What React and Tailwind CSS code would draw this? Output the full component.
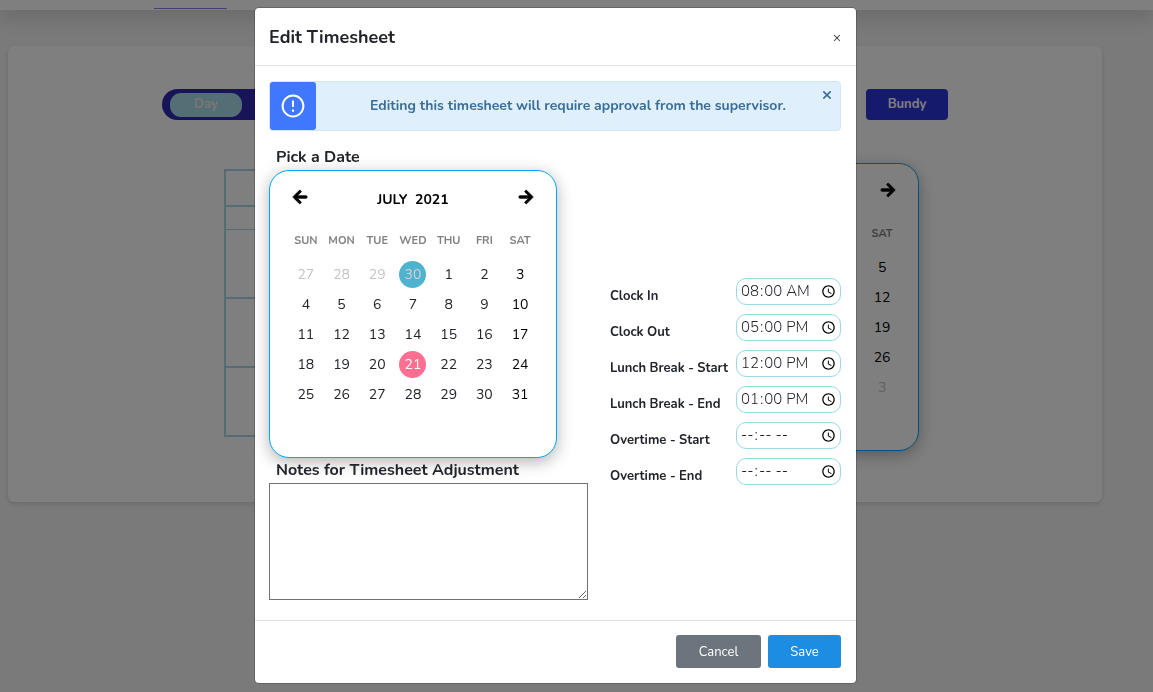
import { FaArrowLeft, FaArrowRight } from "react-icons/fa";

const DAYS = ["SUN", "MON", "TUE", "WED", "THU", "FRI", "SAT"];

function buildWeeks(leading, total, trailing) {
  const cells = [
    ...leading.map((n) => ({ n, muted: true })),
    ...Array.from({ length: total }, (_, i) => ({ n: i + 1, muted: false })),
    ...trailing.map((n) => ({ n, muted: true })),
  ];
  const weeks = [];
  for (let i = 0; i < cells.length; i += 7) weeks.push(cells.slice(i, i + 7));
  return weeks;
}

const JULY = buildWeeks([27, 28, 29, 30], 31, []);
const JUNE = buildWeeks([30, 31], 30, [1, 2, 3]);

function dayClass(cell, column, today, selected) {
  if (cell.muted && cell.n === today) return "bg-[#4fb3d0] text-[#d3d3d3]";
  if (!cell.muted && cell.n === selected) return "bg-[#ff6f91] text-white";
  if (cell.muted) return "text-[#c4c4c4]";
  return column === 6 ? "text-black" : "text-[#212529]";
}

function Calendar({ month, weeks, today, selected }) {
  return (
    <section
      aria-label={month}
      className="h-72 w-72 shrink-0 rounded-[20px] border border-[#00a8f3] bg-white px-[18px] pt-[13px] shadow-[0_4px_16px_rgba(0,0,0,0.3)]"
    >
      <div className="flex h-[30px] items-center justify-between px-1">
        <button type="button" aria-label="Previous month" className="-mt-1 flex text-black">
          <FaArrowLeft size={16} strokeWidth={26} stroke="currentColor" />
        </button>
        <h3 className="text-[14px] font-bold whitespace-pre text-black">{month}</h3>
        <button type="button" aria-label="Next month" className="-mt-1 flex text-black">
          <FaArrowRight size={16} strokeWidth={26} stroke="currentColor" />
        </button>
      </div>
      <table className="mt-3 w-full table-fixed text-center">
        <thead>
          <tr className="h-[30px]">
            {DAYS.map((d) => (
              <th key={d} scope="col" className="p-0 text-[11px] font-bold text-[#808080]">
                {d}
              </th>
            ))}
          </tr>
        </thead>
        <tbody>
          <tr className="h-[3px]" aria-hidden="true" />
          {weeks.map((week, w) => (
            <tr key={w} className="h-[30px]">
              {week.map((cell, i) => (
                <td key={i} className="p-0">
                  <button
                    type="button"
                    className={`mx-auto flex h-[27px] w-[27px] items-center justify-center rounded-full pt-px text-[14px] ${dayClass(cell, i, today, selected)}`}
                  >
                    {cell.n}
                  </button>
                </td>
              ))}
            </tr>
          ))}
        </tbody>
      </table>
    </section>
  );
}

const TIMES = [
  { id: "clock-in", label: "Clock In", value: "08:00" },
  { id: "clock-out", label: "Clock Out", value: "17:00" },
  { id: "lunch-start", label: "Lunch Break - Start", value: "12:00" },
  { id: "lunch-end", label: "Lunch Break - End", value: "13:00" },
  { id: "ot-start", label: "Overtime - Start", value: "" },
  { id: "ot-end", label: "Overtime - End", value: "" },
];

function Page() {
  return (
    <div className="min-h-screen bg-[#f4f4f4]">
      <nav className="flex h-[10px] items-end bg-white pl-[154px] shadow-[0_4px_20px_rgba(0,0,0,0.25)]">
        <span className="mb-px h-px w-[73px] bg-[#8a78f0]" />
      </nav>
      <main className="mt-9 mr-[51px] ml-2 h-[456px] rounded-md bg-white pt-[43px] shadow-[0_2px_4px_rgba(80,100,120,0.2)]">
        <div className="mr-[154px] ml-[154px] flex h-[31px] justify-between">
          <div className="flex w-[240px] items-center rounded-full bg-[#2e2aae] px-2">
            <button type="button" className="h-6 w-[72px] rounded-[11px] bg-[#a6dde9] text-[13px] font-bold text-[#f4eaea]">
              Day
            </button>
          </div>
          <button type="button" className="w-[82px] rounded-[4px] bg-[#2c34da] text-[13px] font-bold text-white">
            Bundy
          </button>
        </div>
        <div className="mr-[183px] ml-[216px] mt-[43px] flex items-start justify-between">
          <table className="mt-[6px] w-[380px] border-collapse border-2 border-[#add8e6]">
            <tbody>
              <tr className="h-9 border-b-2 border-[#add8e6]"><td /></tr>
              <tr className="h-[23px] border-b border-[#add8e6]"><td /></tr>
              <tr className="h-[69px] border-b-2 border-[#add8e6]"><td /></tr>
              <tr className="h-[69px] border-b-2 border-[#add8e6]"><td /></tr>
              <tr className="h-[69px]"><td /></tr>
            </tbody>
          </table>
          <Calendar month="JUNE  2021" weeks={JUNE} />
        </div>
      </main>
    </div>
  );
}

export default function App() {
  return (
    <div className="relative overflow-hidden font-['Nunito','Open_Sans',sans-serif] text-[#212529]">
      <Page />
      <div className="fixed inset-0 overflow-hidden bg-black/50 pt-2 pr-[42px]">
        <div
          role="dialog"
          aria-modal="true"
          aria-labelledby="dialog-title"
          className="mx-auto max-w-[601px] rounded-[4px] bg-white ring-1 ring-black/20"
        >
          <header className="flex h-[58px] items-center justify-between border-b border-[#dee2e6] pt-px pr-[15px] pl-[14px]">
            <h1 id="dialog-title" className="text-[18px] font-bold">Edit Timesheet</h1>
            <button type="button" aria-label="Close" className="flex w-2 justify-center text-[14px] text-[#333]">×</button>
          </header>

          <div className="pt-[15px] pr-[15px] pb-5 pl-[14px]">
            <div role="alert" className="relative flex h-[50px] items-stretch rounded-[4px] border border-[#cfe7f9] bg-[#e0effc]">
              <span className="flex w-[46px] items-center justify-center rounded-[3px] bg-[#3f78ff]">
                <svg width="24" height="24" viewBox="0 0 24 24" fill="none" stroke="#fff" strokeWidth="2">
                  <circle cx="12" cy="12" r="10.4" />
                  <path d="M12 6.5v6.5M12 15.5v2.2" />
                </svg>
              </span>
              <p className="flex flex-1 items-center justify-center pb-0.5 text-[14px] font-bold text-[#3a6d97]">
                Editing this timesheet will require approval from the supervisor.
              </p>
              <button type="button" aria-label="Dismiss" className="absolute top-[9px] right-[9px] text-[#3a6d97]">
                <svg width="8" height="8" viewBox="0 0 8 8" stroke="currentColor" strokeWidth="1.6">
                  <path d="M0.3 0.3l7.4 7.4M7.7 0.3l-7.4 7.4" />
                </svg>
              </button>
            </div>

            <div className="mt-[13px] flex items-start gap-[22px]">
              <div className="flex w-[319px] shrink-0 flex-col">
                <h2 className="ml-[7px] text-[16px] leading-[26px] font-bold">Pick a Date</h2>
                <Calendar month="JULY  2021" weeks={JULY} today={30} selected={21} />
                <label htmlFor="notes" className="ml-[7px] text-[16px] leading-[25px] font-bold">
                  Notes for Timesheet Adjustment
                </label>
                <textarea id="notes" className="h-[117px] w-full border border-[#6f7378] bg-white p-1" />
              </div>
              <div className="mt-[134px] flex flex-1 flex-col gap-[9px]">
                {TIMES.map((t) => (
                  <div key={t.id} className="flex h-[27px] items-end justify-between">
                    <label htmlFor={t.id} className="text-[13px] leading-[18px] font-bold whitespace-nowrap">
                      {t.label}
                    </label>
                    <input
                      id={t.id}
                      type="time"
                      defaultValue={t.value}
                      className="h-[27px] w-[105px] rounded-[10px] border border-[#9bd7e5] bg-white pl-[3px] text-[15px] font-light text-[#212529]"
                    />
                  </div>
                ))}
              </div>
            </div>
          </div>

          <footer className="flex justify-end gap-[7px] border-t border-[#dbe2e8] px-[15px] pt-[14px] pb-[15px]">
            <button type="button" className="h-[33px] w-[85px] rounded-[3px] bg-[#6c757d] pt-0.5 text-[13px] text-white">Cancel</button>
            <button type="button" className="h-[33px] w-[73px] rounded-[3px] bg-[#1c8de3] pt-0.5 text-[13px] text-white">Save</button>
          </footer>
        </div>
      </div>
    </div>
  );
}
